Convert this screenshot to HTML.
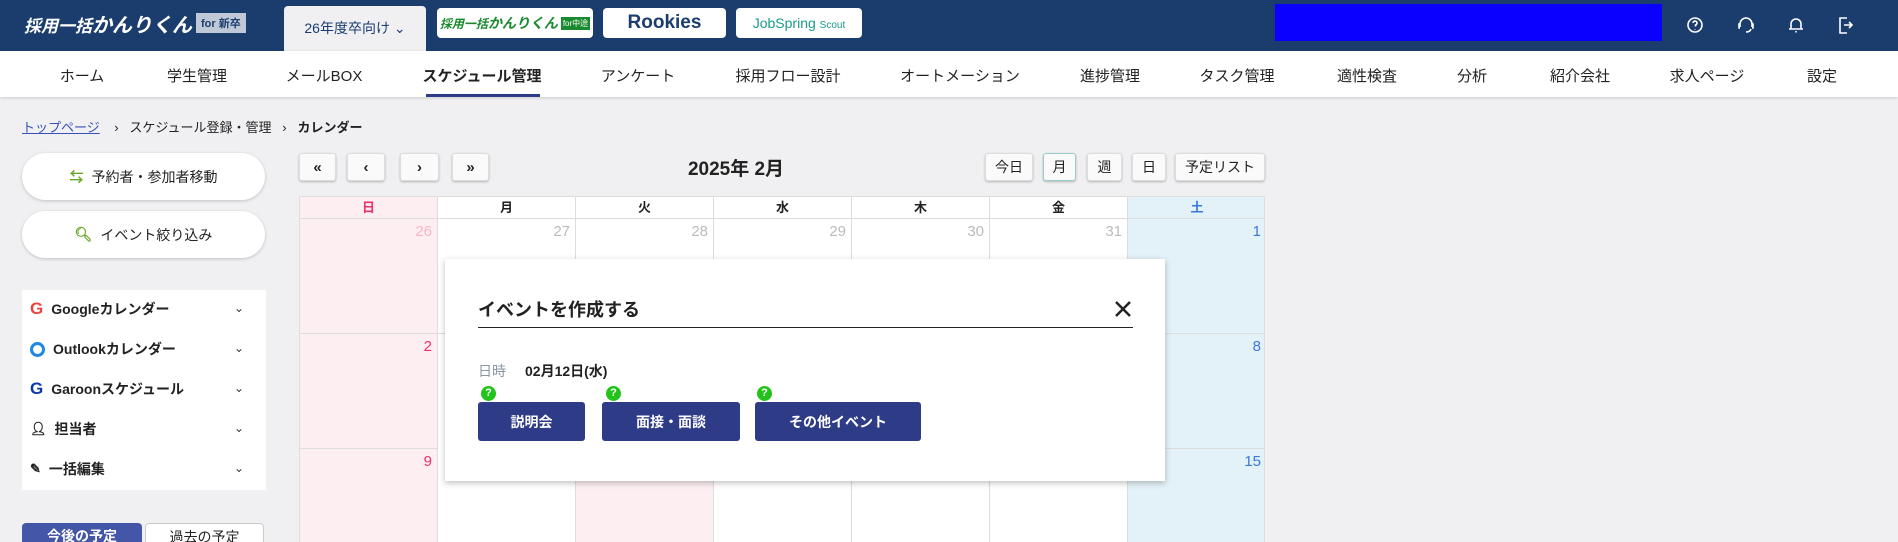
<!DOCTYPE html>
<html style="width:1898px;height:542px;overflow:hidden"><head><meta charset="utf-8">
<style>
*{box-sizing:border-box;margin:0;padding:0}
body{width:1898px;height:542px;overflow:hidden;background:#f0f0f2;font-family:"Liberation Sans","Noto Sans CJK JP",sans-serif;color:#222}
#root{position:relative;width:1898px;height:542px;overflow:hidden}
.abs{position:absolute}
.hdr{left:0;top:0;width:1898px;height:51px;background:#1b3d6e}
.nav{left:0;top:51px;width:1898px;height:46px;background:#fff;box-shadow:0 1px 3px rgba(0,0,0,.15)}
.nav span{position:absolute;top:14px;font-size:15px;color:#222;transform:translateX(-50%);white-space:nowrap}
.btnw{background:#fff;border-radius:4px}
.pill{left:22px;width:243px;height:47px;background:#fff;border-radius:24px;box-shadow:0 1px 3px rgba(0,0,0,.2);font-size:14px;display:flex;align-items:center;justify-content:center;gap:8px}
.acc{left:22px;top:290px;width:244px;height:200px;background:#fff}
.acc div{position:absolute;left:8px;font-size:14px;font-weight:bold;color:#222;display:flex;align-items:center;gap:8px}
.acc .ch{position:absolute;left:212px;font-size:12px;color:#333}
.nb{top:153px;height:28px;background:#fafafa;border:1px solid #ddd;border-radius:3px;box-shadow:0 1px 2px rgba(0,0,0,.25);font-size:15px;font-weight:bold;display:flex;align-items:center;justify-content:center}
.cal{left:299px;top:196px;width:966px;height:346px;background:#fff;border:1px solid #ddd;border-bottom:0;overflow:hidden}
.hd{position:absolute;top:0;height:22px;font-size:13px;font-weight:bold;text-align:center;line-height:21px;border-right:1px solid #ddd;border-bottom:1px solid #ddd}
.cell{position:absolute;border-right:1px solid #ddd;border-bottom:1px solid #ddd;background:#fff}
.num{position:absolute;right:5px;top:4px;font-size:15px;color:#bbb}
.modal{left:445px;top:259px;width:720px;height:222px;background:#fff;box-shadow:0 2px 6px rgba(0,0,0,.25)}
.mb{position:absolute;top:143px;height:39px;background:#2e3b87;border-radius:3px;color:#fff;font-weight:bold;font-size:14px;display:flex;align-items:center;justify-content:center}
.q{position:absolute;top:127px;width:15px;height:15px;border-radius:50%;background:#22c41a;color:#fff;font-size:11px;font-weight:bold;text-align:center;line-height:15px}
</style></head><body><div id="root">
<div class="abs hdr"></div>
<div class="abs" style="left:24px;top:11px;height:24px;display:flex;align-items:center;gap:4px;white-space:nowrap">
<span style="color:#fff;font-weight:bold;font-style:italic;font-size:17px">採用一括<span style="font-size:20px">かんりくん</span></span>
<span style="background:#bfc8d6;color:#1b3d6e;font-size:11px;font-weight:bold;padding:2px 5px">for 新卒</span></div>
<div class="abs" style="left:284px;top:6px;width:142px;height:45px;background:#f0f0f2;border-radius:4px 4px 0 0;color:#1b3d6e;font-size:14px;text-align:center;line-height:45px">26年度卒向け ⌄</div>
<div class="abs btnw" style="left:437px;top:8px;width:156px;height:30px;display:flex;align-items:center;justify-content:center;gap:3px;white-space:nowrap"><span style="color:#1a8a2e;font-weight:bold;font-style:italic;font-size:12px">採用一括<span style="font-size:14px">かんりくん</span></span><span style="background:#1a8a2e;color:#fff;font-size:8px;padding:1px 2px">for中途</span></div>
<div class="abs btnw" style="left:603px;top:8px;width:123px;height:30px;text-align:center;line-height:30px;font-weight:bold;font-size:19px;color:#1b3d6e">Rookies</div>
<div class="abs btnw" style="left:736px;top:8px;width:126px;height:30px;text-align:center;line-height:30px;font-size:14px;color:#1a9a8a;white-space:nowrap">JobSpring <span style="font-size:10px">Scout</span></div>
<div class="abs" style="left:1275px;top:4px;width:387px;height:37px;background:#0a00ff"></div>
<svg class="abs" style="left:1685px;top:14px" width="180" height="22" fill="none" stroke="#fff" stroke-width="1.6">
<circle cx="10" cy="11" r="7"/><path d="M8 9a2 2 0 1 1 2.5 2v1.5M10 15v.5"/>
<path d="M55 13v-3a6 6 0 0 1 12 0v3M55 10h-1v4h1M67 10h1v4h-1M66 15q-1 3-5 3"/>
<path d="M106 15v-5a5 5 0 0 1 10 0v5zM104 15h14M111 17v1.5"/>
<path d="M162 4h-7v15h7M159 11h8M164 8l3 3-3 3"/></svg>

<div class="abs nav">
<span style="left:82px">ホーム</span><span style="left:197px">学生管理</span><span style="left:324px">メールBOX</span><span style="left:482px;font-weight:bold">スケジュール管理</span><span style="left:638px">アンケート</span><span style="left:788px">採用フロー設計</span><span style="left:960px">オートメーション</span><span style="left:1110px">進捗管理</span><span style="left:1237px">タスク管理</span><span style="left:1367px">適性検査</span><span style="left:1472px">分析</span><span style="left:1580px">紹介会社</span><span style="left:1707px">求人ページ</span><span style="left:1822px">設定</span>
<div style="position:absolute;left:426px;top:43px;width:114px;height:3px;background:#2e3b87"></div></div>

<div class="abs" style="left:22px;top:117px;font-size:13px;color:#222;white-space:nowrap"><span style="color:#3552b8;text-decoration:underline">トップページ</span>&nbsp;&nbsp;&nbsp;&nbsp;›&nbsp;&nbsp;&nbsp;スケジュール登録・管理&nbsp;&nbsp;&nbsp;›&nbsp;&nbsp;&nbsp;<b>カレンダー</b></div>

<div class="abs pill" style="top:153px"><span style="color:#6aa82a;font-weight:bold">⇆</span>予約者・参加者移動</div>
<div class="abs pill" style="top:211px"><span style="color:#6aa82a;font-weight:bold">🔍︎</span>イベント絞り込み</div>
<div class="abs acc">
<div style="top:9px"><span style="color:#e8453c;font-size:17px">G</span>Googleカレンダー</div><span class="ch" style="top:11px">⌄</span>
<div style="top:49px"><span style="display:inline-block;width:15px;height:15px;border:3px solid #1e88e5;border-radius:50%"></span>Outlookカレンダー</div><span class="ch" style="top:51px">⌄</span>
<div style="top:89px"><span style="color:#0b3aa8;font-size:17px">G</span>Garoonスケジュール</div><span class="ch" style="top:91px">⌄</span>
<div style="top:129px"><span style="font-size:13px">👤︎</span>担当者</div><span class="ch" style="top:131px">⌄</span>
<div style="top:169px"><span style="font-size:13px">✎</span>一括編集</div><span class="ch" style="top:171px">⌄</span>
</div>
<div class="abs" style="left:22px;top:523px;width:120px;height:19px;background:#4456a8;border-radius:4px 4px 0 0;color:#fff;font-weight:bold;font-size:14px;text-align:center;line-height:26px;overflow:hidden">今後の予定</div>
<div class="abs" style="left:145px;top:523px;width:119px;height:19px;background:#fff;border:1px solid #ccc;border-bottom:0;border-radius:4px 4px 0 0;font-size:14px;text-align:center;line-height:26px;overflow:hidden">過去の予定</div>

<div class="abs nb" style="left:299px;width:37px">«</div>
<div class="abs nb" style="left:347px;width:38px">‹</div>
<div class="abs nb" style="left:400px;width:39px">›</div>
<div class="abs nb" style="left:452px;width:37px">»</div>
<div class="abs" style="left:636px;top:154px;width:200px;text-align:center;font-size:19px;font-weight:bold">2025年 2月</div>
<div class="abs nb" style="left:985px;width:48px;font-weight:normal;font-size:14px">今日</div>
<div class="abs nb" style="left:1043px;width:33px;font-weight:normal;font-size:14px;border-color:#9cc">月</div>
<div class="abs nb" style="left:1087px;width:35px;font-weight:normal;font-size:14px">週</div>
<div class="abs nb" style="left:1132px;width:34px;font-weight:normal;font-size:14px">日</div>
<div class="abs nb" style="left:1175px;width:90px;font-weight:normal;font-size:14px">予定リスト</div>

<div class="abs cal">
<div class="hd" style="left:0;width:138px;background:#fdeef2;color:#e8336b">日</div>
<div class="hd" style="left:138px;width:138px">月</div>
<div class="hd" style="left:276px;width:138px">火</div>
<div class="hd" style="left:414px;width:138px">水</div>
<div class="hd" style="left:552px;width:138px">木</div>
<div class="hd" style="left:690px;width:138px">金</div>
<div class="hd" style="left:828px;width:138px;background:#e3f1f8;color:#3a78d8;border-right:0">土</div>
<div class="cell" style="left:0;top:22px;width:138px;height:115px;background:#fdeef2"><span class="num" style="color:#f7b5c9">26</span></div>
<div class="cell" style="left:138px;top:22px;width:138px;height:115px"><span class="num">27</span></div>
<div class="cell" style="left:276px;top:22px;width:138px;height:115px"><span class="num">28</span></div>
<div class="cell" style="left:414px;top:22px;width:138px;height:115px"><span class="num">29</span></div>
<div class="cell" style="left:552px;top:22px;width:138px;height:115px"><span class="num">30</span></div>
<div class="cell" style="left:690px;top:22px;width:138px;height:115px"><span class="num">31</span></div>
<div class="cell" style="left:828px;top:22px;width:138px;height:115px;background:#e3f1f8;border-right:0"><span class="num" style="color:#3a78d8">1</span></div>
<div class="cell" style="left:0;top:137px;width:138px;height:115px;background:#fdeef2"><span class="num" style="color:#e8336b">2</span></div>
<div class="cell" style="left:828px;top:137px;width:138px;height:115px;background:#e3f1f8;border-right:0"><span class="num" style="color:#3a78d8">8</span></div>
<div class="cell" style="left:0;top:252px;width:138px;height:140px;background:#fdeef2"><span class="num" style="color:#e8336b">9</span></div>
<div class="cell" style="left:138px;top:252px;width:138px;height:140px"></div>
<div class="cell" style="left:276px;top:252px;width:138px;height:140px;background:#fdeef2"></div>
<div class="cell" style="left:414px;top:252px;width:138px;height:140px"></div>
<div class="cell" style="left:552px;top:252px;width:138px;height:140px"></div>
<div class="cell" style="left:690px;top:252px;width:138px;height:140px"></div>
<div class="cell" style="left:828px;top:252px;width:138px;height:140px;background:#e3f1f8;border-right:0"><span class="num" style="color:#3a78d8">15</span></div>
</div>

<div class="abs modal">
<div style="position:absolute;left:33px;top:37px;font-size:18px;font-weight:bold;color:#222">イベントを作成する</div>
<div style="position:absolute;left:33px;top:68px;width:655px;height:1px;background:#222"></div>
<svg style="position:absolute;left:669px;top:41px" width="18" height="18" stroke="#222" stroke-width="2.5"><path d="M2 2L16 16M16 2L2 16"/></svg>
<div style="position:absolute;left:33px;top:102px;font-size:14px;color:#8a94a6">日時</div>
<div style="position:absolute;left:80px;top:102px;font-size:14px;font-weight:bold">02月12日(水)</div>
<div class="q" style="left:36px">?</div><div class="q" style="left:161px">?</div><div class="q" style="left:312px">?</div>
<div class="mb" style="left:33px;width:107px">説明会</div>
<div class="mb" style="left:157px;width:138px">面接・面談</div>
<div class="mb" style="left:310px;width:166px">その他イベント</div>
</div>
</div></body></html>
